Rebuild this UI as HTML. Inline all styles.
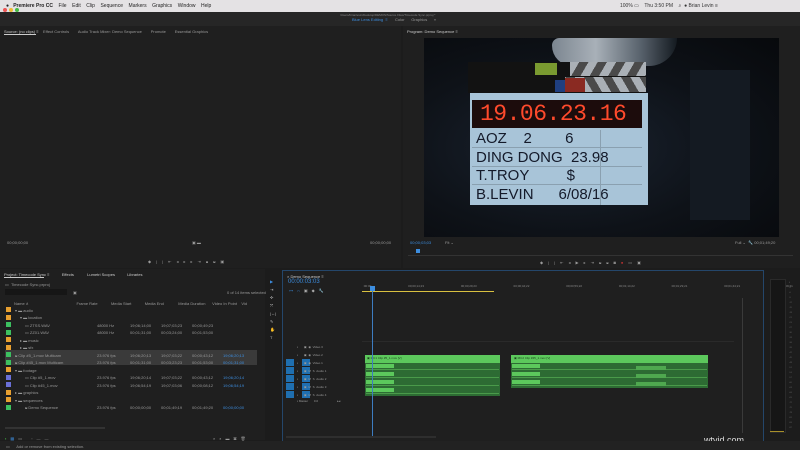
<!DOCTYPE html>
<html><head><meta charset="utf-8"><style>
*{margin:0;padding:0;box-sizing:border-box}
body{width:800px;height:450px;overflow:hidden;background:#1c1c1c;font-family:"Liberation Sans",sans-serif;color:#aaa;position:relative}
.a{position:absolute}
.t{position:absolute;font-size:4px;white-space:nowrap;color:#9a9a9a}
.b{color:#3d8ee0}
.sq{position:absolute;width:5px;height:5px}
</style></head><body>
<!-- menu bar -->
<div class="a" style="left:0;top:0;width:800px;height:12px;background:#e4e2e4"></div>
<div class="t" style="left:6px;top:3px;font-size:5px;color:#222">●&nbsp;&nbsp;&nbsp;<b>Premiere Pro CC</b>&nbsp;&nbsp;&nbsp; File &nbsp;&nbsp; Edit &nbsp;&nbsp; Clip &nbsp;&nbsp; Sequence &nbsp;&nbsp; Markers &nbsp;&nbsp; Graphics &nbsp;&nbsp; Window &nbsp;&nbsp; Help</div>
<div class="t" style="left:620px;top:3px;font-size:5px;color:#333">100% ▭ &nbsp;&nbsp; Thu 3:50 PM &nbsp;&nbsp; ⌕ &nbsp;● Brian Levin ≡</div>
<!-- title bar -->
<div class="a" style="left:0;top:12px;width:800px;height:14px;background:#262626"></div>
<div class="a" style="left:3px;top:8px;width:4px;height:4px;border-radius:50%;background:#e55"></div>
<div class="a" style="left:9px;top:8px;width:4px;height:4px;border-radius:50%;background:#eb3"></div>
<div class="a" style="left:15px;top:8px;width:4px;height:4px;border-radius:50%;background:#4b4"></div>
<div class="t" style="left:340px;top:13px;font-size:3px;color:#888">/Users/brianlevin/Desktop/DEMOS/Source Files/Timecode Sync.prproj *</div>
<div class="t b" style="left:352px;top:17px">Blue Lens Editing &nbsp;≡</div>
<div class="t" style="left:395px;top:17px">Color &nbsp;&nbsp;&nbsp;&nbsp; Graphics &nbsp;&nbsp;&nbsp;&nbsp; »</div>
<!-- source panel -->
<div class="a" style="left:0;top:26px;width:401px;height:242px;background:#1f1f1f"></div>
<div class="t" style="left:4px;top:29px;color:#ccc">Source: (no clips) ≡</div>
<div class="a" style="left:4px;top:34px;width:32px;height:1px;background:#ccc"></div>
<div class="t" style="left:43px;top:29px">Effect Controls &nbsp;&nbsp;&nbsp;&nbsp;&nbsp;&nbsp; Audio Track Mixer: Demo Sequence &nbsp;&nbsp;&nbsp;&nbsp;&nbsp;&nbsp; Promote &nbsp;&nbsp;&nbsp;&nbsp;&nbsp;&nbsp; Essential Graphics</div>
<div class="t" style="left:7px;top:240px">00;00;00;00</div>
<div class="t" style="left:192px;top:240px">▣ ▬</div>
<div class="t" style="left:370px;top:240px">00;00;00;00</div>
<div class="t" style="left:148px;top:259px;letter-spacing:5px">◆||⇤◂▸▸⇥⩏⩏▣</div>
<!-- program panel -->
<div class="a" style="left:403px;top:26px;width:397px;height:242px;background:#1f1f1f"></div>
<div class="t" style="left:407px;top:29px;color:#ccc">Program: Demo Sequence ≡</div>
<div class="a" style="left:424px;top:38px;width:355px;height:199px;background:radial-gradient(ellipse at 40% 55%,#1a2330 0%,#0e1218 55%,#07090c 100%)"></div>
<div class="a" style="left:690px;top:70px;width:60px;height:150px;background:#141a22"></div>
<!-- hand -->
<div class="a" style="left:552px;top:38px;width:125px;height:28px;background:linear-gradient(90deg,#7c8690,#a8b0b8 35%,#5a646e 70%,#141a20);border-radius:8px 0 30px 22px"></div>
<!-- sticks -->
<div class="a" style="left:468px;top:62px;width:178px;height:31px;background:#121212"></div>
<div class="a" style="left:570px;top:62px;width:76px;height:14px;background:repeating-linear-gradient(120deg,#aab0b6 0 8px,#4a4a4a 8px 16px)"></div>
<div class="a" style="left:565px;top:77px;width:81px;height:15px;background:repeating-linear-gradient(60deg,#aab0b6 0 8px,#4a4a4a 8px 16px)"></div>
<div class="a" style="left:565px;top:78px;width:20px;height:14px;background:#8a2a22"></div>
<div class="a" style="left:555px;top:80px;width:10px;height:12px;background:#1f3f80"></div>
<div class="a" style="left:535px;top:63px;width:22px;height:12px;background:#7a9a30"></div>
<!-- board -->
<div class="a" style="left:470px;top:93px;width:178px;height:112px;background:#a8c4d8"></div>
<div class="a" style="left:472px;top:100px;width:170px;height:28px;background:#1c0c0c"></div>
<div class="t" style="left:480px;top:101px;font-size:23px;color:#ff4a2c;letter-spacing:-0.5px;font-family:'Liberation Mono',monospace">19.06.23.16</div>
<div class="a" style="left:472px;top:147px;width:170px;height:1px;background:#8aa0b0"></div>
<div class="a" style="left:472px;top:166px;width:170px;height:1px;background:#8aa0b0"></div>
<div class="a" style="left:472px;top:184px;width:170px;height:1px;background:#8aa0b0"></div>
<div class="a" style="left:600px;top:130px;width:1px;height:75px;background:#8aa0b0"></div>
<div class="t" style="left:476px;top:130px;font-size:15px;color:#141a2a;line-height:18.5px;white-space:pre">AOZ    2        6
DING DONG  23.98
T.TROY         $
B.LEVIN      6/08/16</div>
<!-- program controls -->
<div class="t b" style="left:410px;top:240px">00;00;03;03</div>
<div class="t" style="left:445px;top:240px">Fit ⌄</div>
<div class="t" style="left:735px;top:240px">Full ⌄ &nbsp;🔧 00;01;49;20</div>
<div class="a" style="left:408px;top:255px;width:385px;height:1px;background:#333"></div>
<div class="a" style="left:416px;top:249px;width:4px;height:4px;background:#3d8ee0"></div>
<div class="t" style="left:540px;top:260px;letter-spacing:5px">◆||⇤◂▶▸⇥⩏⩏◙<span style="color:#c33">●</span>▭▣</div>
<!-- project panel -->
<div class="a" style="left:0;top:269px;width:265px;height:171px;background:#1f1f1f"></div>
<div class="t" style="left:4px;top:272px;color:#ccc">Project: Timecode Sync ≡ &nbsp;&nbsp;&nbsp;&nbsp;&nbsp;&nbsp;&nbsp;&nbsp;&nbsp; Effects &nbsp;&nbsp;&nbsp;&nbsp;&nbsp;&nbsp;&nbsp;&nbsp;&nbsp;&nbsp; Lumetri Scopes &nbsp;&nbsp;&nbsp;&nbsp;&nbsp;&nbsp;&nbsp;&nbsp;&nbsp; Libraries</div>
<div class="a" style="left:4px;top:277px;width:40px;height:1px;background:#ccc"></div>
<div class="t" style="left:5px;top:282px">▭ &nbsp;Timecode Sync.prproj</div>
<div class="a" style="left:5px;top:289px;width:62px;height:6px;background:#161616"></div>
<div class="t" style="left:73px;top:290px">▣</div>
<div class="t" style="left:227px;top:290px">0 of 14 items selected</div>
<div class="t" style="left:14px;top:301px">Name ∧ &nbsp;&nbsp;&nbsp;&nbsp;&nbsp;&nbsp;&nbsp;&nbsp;&nbsp;&nbsp;&nbsp;&nbsp;&nbsp;&nbsp;&nbsp;&nbsp;&nbsp;&nbsp;&nbsp;&nbsp;&nbsp;&nbsp;&nbsp;&nbsp;&nbsp;&nbsp;&nbsp;&nbsp;&nbsp;&nbsp;&nbsp;&nbsp;&nbsp;&nbsp;&nbsp;&nbsp;&nbsp;&nbsp;&nbsp;&nbsp;&nbsp; Frame Rate &nbsp;&nbsp;&nbsp;&nbsp;&nbsp;&nbsp;&nbsp;&nbsp;&nbsp;&nbsp; Media Start &nbsp;&nbsp;&nbsp;&nbsp;&nbsp;&nbsp;&nbsp;&nbsp;&nbsp;&nbsp; Media End &nbsp;&nbsp;&nbsp;&nbsp;&nbsp;&nbsp;&nbsp;&nbsp;&nbsp;&nbsp;&nbsp; Media Duration &nbsp;&nbsp;&nbsp;&nbsp; Video In Point &nbsp;&nbsp; Vid</div>
<div class="a" style="left:5px;top:350px;width:252px;height:15px;background:#3a3a3a"></div>
<div id="rows"></div>
<div class="a" style="left:5px;top:427px;width:100px;height:2px;background:#333"></div>
<div class="t" style="left:5px;top:436px;letter-spacing:4px"><span style="color:#4b4">▪</span><span class="b">▦</span>▭ ◦—— &nbsp;</div>
<div class="t" style="left:213px;top:436px;letter-spacing:4px">⌕⌕▬▣🗑</div>
<!-- tools -->
<div class="t" style="left:270px;top:278px;line-height:8px;color:#bbb;white-space:pre"><span class="b">▶</span>
⇥
✣
⤧
|↔|
✎
✋
T</div>
<!-- timeline -->
<div class="a" style="left:282px;top:270px;width:482px;height:172px;background:#1f1f1f;border:1px solid #24466a"></div>
<div class="t" style="left:287px;top:274px;color:#ccc">× Demo Sequence ≡</div>
<div class="t b" style="left:288px;top:279px;font-size:6px">00:00:03:03</div>
<div class="t b" style="left:289px;top:288px;letter-spacing:4px">⊶∩<span style="color:#aaa">▣◆🔧</span></div>
<div class="t" style="left:363px;top:284px;font-size:3px;word-spacing:36px;color:#888">:00:00 00;00;14;23 00;00;29;23 00;00;44;22 00;00;59;22 00;01;14;22 00;01;29;21 00;01;44;21 00;01;59;21</div>
<div class="a" style="left:362px;top:291px;width:132px;height:1px;background:#d8c040"></div>
<div class="a" style="left:362px;top:341px;width:372px;height:1px;background:#2a2a2a"></div>
<div id="tracks"></div>
<div class="a" style="left:365px;top:355px;width:135px;height:8px;background:#5cc85c"></div>
<div class="a" style="left:511px;top:355px;width:197px;height:8px;background:#5cc85c"></div>
<div class="a" style="left:365px;top:363px;width:135px;height:33px;background:#2d6b33"></div>
<div class="a" style="left:511px;top:363px;width:197px;height:25px;background:#2d6b33"></div>
<div id="alab"></div>
<div class="t" style="left:367px;top:356px;color:#1d3d1d;font-size:3px">▣ MC1 Clip #5_1.mov [V]</div>
<div class="t" style="left:514px;top:356px;color:#1d3d1d;font-size:3px">▣ MC2 Clip #45_1.mov [V]</div>
<div class="a" style="left:372px;top:287px;width:1px;height:150px;background:#3d7cc0"></div>
<div class="a" style="left:370px;top:286px;width:5px;height:5px;background:#3d8ee0"></div>
<div class="a" style="left:742px;top:298px;width:1px;height:135px;background:#3a3a3a"></div>
<div class="a" style="left:286px;top:436px;width:150px;height:2px;background:#2e2e2e"></div>
<!-- meters -->
<div class="a" style="left:770px;top:279px;width:16px;height:154px;background:#161616;border:1px solid #2a2a2a"></div>
<div class="a" style="left:770px;top:431px;width:14px;height:1px;background:#a8902a"></div>
<div class="t" style="left:789px;top:281px;font-size:2px;line-height:5px;white-space:pre;color:#666">0
-3
-6
-9
-12
-15
-18
-21
-24
-27
-30
-33
-36
-39
-42
-45
-48
-51
-54
-57
-60
-63
-66
-69
-72
-75
-78
-81
-84
-87</div>
<div class="t" style="left:704px;top:435px;font-size:9px;color:#ddd">wtvid.com</div>
<!-- status -->
<div class="a" style="left:0;top:441px;width:800px;height:9px;background:#222"></div>
<div class="t" style="left:6px;top:444px">▭ &nbsp;&nbsp;&nbsp;&nbsp; Add or remove from existing selection.</div>
<script>
var R=[["o",1,"▾ ▬ audio"],["o",2,"▾ ▬ location"],["g",3,"▭ ZTSS.WAV","48000 Hz","19;06;14;00","19;07;03;23","00;00;49;23",""],["g",3,"▭ ZZ01.WAV","48000 Hz","00;01;31;00","00;03;24;00","00;01;53;00",""],["o",2,"▸ ▬ music"],["o",2,"▸ ▬ sfx"],["g",1,"⩏ Clip #5_1.mov Multicam","23.976 fps","19;06;20;13","19;07;03;22","00;00;43;12","19;06;20;13"],["g",1,"⩏ Clip #45_1.mov Multicam","23.976 fps","00;01;31;00","00;03;23;23","00;01;53;00","00;01;31;00"],["o",1,"▾ ▬ footage"],["b",3,"▭ Clip #5_1.mov","23.976 fps","19;06;20;14","19;07;03;22","00;00;43;12","19;06;20;14"],["b",3,"▭ Clip #45_1.mov","23.976 fps","19;06;54;19","19;07;03;06","00;00;08;12","19;06;54;19"],["o",1,"▸ ▬ graphics"],["o",1,"▾ ▬ sequences"],["g",3,"⩏ Demo Sequence","23.976 fps","00;00;00;00","00;01;49;19","00;01;49;20","00;00;00;00"]];
var C={o:"#e8a030",g:"#3cc060",b:"#6a70d8"},h="";
R.forEach(function(r,i){var y=307+i*7.5;h+='<div class="sq" style="left:6px;top:'+y+'px;background:'+C[r[0]]+'"></div><div class="t" style="left:'+(10+r[1]*5)+'px;top:'+(y+0.5)+'px">'+r[2]+'</div>';if(r[3]){h+='<div class="t" style="left:97px;top:'+(y+.5)+'px">'+r[3]+'</div><div class="t" style="left:130px;top:'+(y+.5)+'px">'+r[4]+'</div><div class="t" style="left:161px;top:'+(y+.5)+'px">'+r[5]+'</div><div class="t" style="left:192px;top:'+(y+.5)+'px">'+r[6]+'</div>';if(r[7])h+='<div class="t b" style="left:223px;top:'+(y+.5)+'px">'+r[7]+'</div>';}});
document.getElementById("rows").innerHTML=h;
var T=["Video 3","Video 2","Video 1","Audio 1","Audio 2","Audio 3","Audio 4"],k="";
T.forEach(function(n,i){var y=343+i*8;var on=i>=2;k+=(on?'<div class="a" style="left:286px;top:'+y+'px;width:8px;height:7px;background:#1f6fb0"></div><div class="a" style="left:302px;top:'+y+'px;width:8px;height:7px;background:#1f6fb0"></div>':'')+'<div class="t" style="left:297px;top:'+(y+1.5)+'px;font-size:3px">▪ &nbsp;&nbsp;&nbsp;&nbsp;&nbsp; ▣ &nbsp;'+(i<3?'◉':'M &nbsp;S')+' &nbsp;'+n+'</div>';});
k+='<div class="t" style="left:297px;top:399px;font-size:3px">▪ Master &nbsp;&nbsp;&nbsp;&nbsp;&nbsp; 0.0 &nbsp;&nbsp;&nbsp;&nbsp;&nbsp;&nbsp;&nbsp;&nbsp;&nbsp;&nbsp;&nbsp;&nbsp;&nbsp;&nbsp;&nbsp;&nbsp;&nbsp;&nbsp;&nbsp;&nbsp;&nbsp; ▸◂</div>';
document.getElementById("tracks").innerHTML=k;
var a="";for(var i=0;i<4;i++){var y=364+i*8;a+='<div class="a" style="left:366px;top:'+y+'px;width:28px;height:4px;background:#5cc85c"></div><div class="a" style="left:366px;top:'+(y+5)+'px;width:133px;height:1px;background:#4a9a4a"></div>';if(i<3)a+='<div class="a" style="left:512px;top:'+y+'px;width:28px;height:4px;background:#5cc85c"></div><div class="a" style="left:512px;top:'+(y+5)+'px;width:195px;height:1px;background:#4a9a4a"></div><div class="a" style="left:636px;top:'+(y+2)+'px;width:30px;height:4px;background:#4fa84f"></div>';}
document.getElementById("alab").innerHTML=a;
</script>
</body></html>
